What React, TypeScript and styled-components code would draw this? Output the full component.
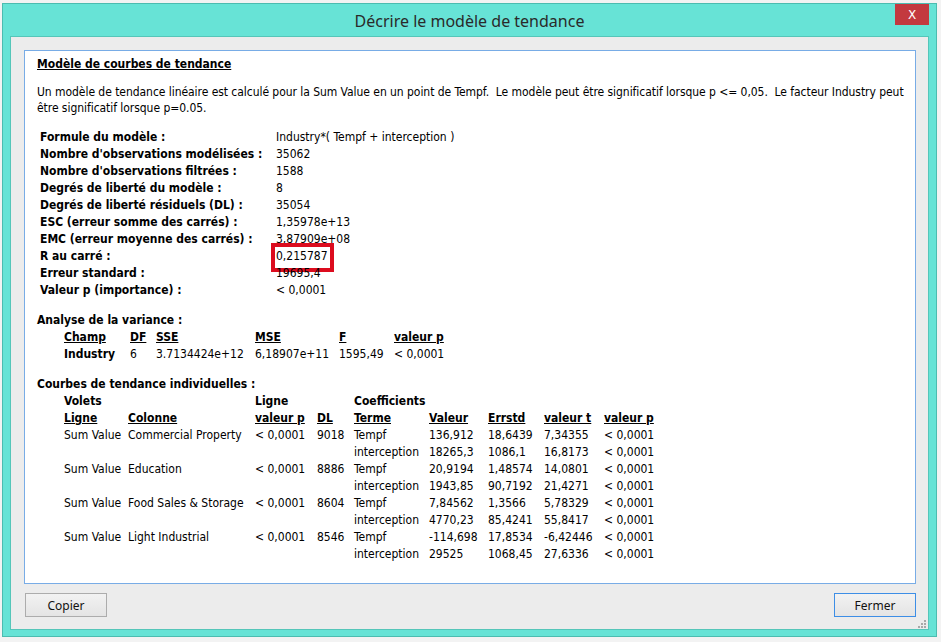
import React from "react";
import styled, { createGlobalStyle } from "styled-components";

const Global = createGlobalStyle`
  html, body { margin: 0; padding: 0; background: #f3f3f3; }
  body { width: 941px; height: 642px; overflow: hidden; }
`;

const Desktop = styled.div`
  width: 941px;
  height: 642px;
  box-sizing: border-box;
  padding: 3px 0 0 2px;
`;

const Window = styled.div`
  width: 935px;
  height: 634px;
  box-sizing: border-box;
  background: #67e3d6;
  border: 1px solid #4cbcb0;
  display: flex;
  flex-direction: column;
  padding: 0 7px 6px 7px;
`;

const TitleBar = styled.div`
  height: 32px;
  display: grid;
  grid-template-columns: 1fr auto 1fr;
  align-items: start;
`;

const TitleText = styled.div`
  grid-column: 2;
  align-self: center;
  font-family: "Noto Sans", "Open Sans", sans-serif;
  font-size: 16px;
  color: #2a2a2a;
  padding-top: 1px;
`;

const CloseButton = styled.div`
  grid-column: 3;
  justify-self: end;
  width: 34px;
  height: 21px;
  background: #c3393f;
  color: #ffffff;
  display: flex;
  align-items: center;
  justify-content: center;
  font-family: "DejaVu Sans", sans-serif;
  font-size: 12px;
`;

const Client = styled.div`
  position: relative;
  flex: 1;
  background: #ececec;
  border: 1px solid #55c6b9;
  display: flex;
  flex-direction: column;
  padding: 13px 12px 12px 13px;
`;

const Panel = styled.div`
  flex: 1;
  background: #ffffff;
  border: 1px solid #78ace6;
  padding: 5px 12px 0 12px;
  font-family: "DejaVu Sans Condensed", "DejaVu Sans", sans-serif;
  font-stretch: condensed;
  font-size: 12px;
  color: #000;
`;

const Heading = styled.div`
  font-weight: bold;
  text-decoration: underline;
  line-height: 16px;
`;

const Paragraph = styled.div`
  margin-top: 12px;
  line-height: 16px;
  white-space: pre;
  letter-spacing: -0.05px;
`;

const Section = styled.div<{ $gap: number }>`
  margin-top: ${(p) => p.$gap}px;
`;

const SectionTitle = styled.div`
  font-weight: bold;
  line-height: 17px;
`;

const StatsGrid = styled.div`
  margin-left: 3px;
  display: grid;
  grid-template-columns: 236px auto;
  grid-auto-rows: 17px;
  line-height: 17px;
  justify-content: start;
`;

const StatLabel = styled.div`
  font-weight: bold;
  white-space: nowrap;
`;

const StatValue = styled.div`
  position: relative;
  white-space: nowrap;
`;

const Highlight = styled.span`
  position: absolute;
  left: -5px;
  top: -5px;
  width: 63px;
  height: 29px;
  box-sizing: border-box;
  border: 4px solid #dc0c1e;
  pointer-events: none;
`;

const DataGrid = styled.div<{ $cols: string }>`
  margin-left: 27px;
  display: grid;
  grid-template-columns: ${(p) => p.$cols};
  grid-auto-rows: 17px;
  line-height: 17px;
  white-space: nowrap;
`;

const Cell = styled.div<{ $head?: boolean; $bold?: boolean; $col?: number }>`
  font-weight: ${(p) => (p.$head || p.$bold ? "bold" : "normal")};
  text-decoration: ${(p) => (p.$head ? "underline" : "none")};
  ${(p) => (p.$col ? `grid-column: ${p.$col};` : "")}
`;

const ButtonRow = styled.div`
  margin-top: 9px;
  display: flex;
  justify-content: space-between;
  padding-left: 1px;
`;

const Button = styled.button<{ $default?: boolean }>`
  width: 82px;
  height: 24px;
  box-sizing: border-box;
  border: 1px solid ${(p) => (p.$default ? "#3d8ee6" : "#acacac")};
  background: linear-gradient(#f2f2f2, #e4e4e4);
  font-family: "Noto Sans", "Open Sans", sans-serif;
  font-size: 12px;
  color: #111;
  padding: 0;
  margin: 0;
`;

const Grip = styled.svg`
  position: absolute;
  right: 2px;
  bottom: 1px;
`;

const stats: [string, string][] = [
  ["Formule du modèle :", "Industry*( Tempf + interception )"],
  ["Nombre d'observations modélisées :", "35062"],
  ["Nombre d'observations filtrées :", "1588"],
  ["Degrés de liberté du modèle :", "8"],
  ["Degrés de liberté résiduels (DL) :", "35054"],
  ["ESC (erreur somme des carrés) :", "1,35978e+13"],
  ["EMC (erreur moyenne des carrés) :", "3,87909e+08"],
  ["R au carré :", "0,215787"],
  ["Erreur standard :", "19695,4"],
  ["Valeur p (importance) :", "< 0,0001"],
];

const varHead = ["Champ", "DF", "SSE", "MSE", "F", "valeur p"];
const varRow = ["Industry", "6", "3.7134424e+12", "6,18907e+11", "1595,49", "< 0,0001"];

const indHead = ["Ligne", "Colonne", "valeur p", "DL", "Terme", "Valeur", "Errstd", "valeur t", "valeur p"];

const indRows: string[][] = [
  ["Sum Value", "Commercial Property", "< 0,0001", "9018", "Tempf", "136,912", "18,6439", "7,34355", "< 0,0001"],
  ["", "", "", "", "interception", "18265,3", "1086,1", "16,8173", "< 0,0001"],
  ["Sum Value", "Education", "< 0,0001", "8886", "Tempf", "20,9194", "1,48574", "14,0801", "< 0,0001"],
  ["", "", "", "", "interception", "1943,85", "90,7192", "21,4271", "< 0,0001"],
  ["Sum Value", "Food Sales & Storage", "< 0,0001", "8604", "Tempf", "7,84562", "1,3566", "5,78329", "< 0,0001"],
  ["", "", "", "", "interception", "4770,23", "85,4241", "55,8417", "< 0,0001"],
  ["Sum Value", "Light Industrial", "< 0,0001", "8546", "Tempf", "-114,698", "17,8534", "-6,42446", "< 0,0001"],
  ["", "", "", "", "interception", "29525", "1068,45", "27,6336", "< 0,0001"],
];

export default function App() {
  return (
    <>
      <Global />
      <Desktop>
        <Window>
          <TitleBar>
            <TitleText>Décrire le modèle de tendance</TitleText>
            <CloseButton>X</CloseButton>
          </TitleBar>
          <Client>
            <Panel>
              <Heading>Modèle de courbes de tendance</Heading>
              <Paragraph>
                {"Un modèle de tendance linéaire est calculé pour la Sum Value en un point de Tempf.  Le modèle peut être significatif lorsque p <= 0,05.  Le facteur Industry peut"}
                <br />
                {"être significatif lorsque p=0.05."}
              </Paragraph>
              <Section $gap={13}>
                <StatsGrid>
                  {stats.map(([l, v]) => (
                    <React.Fragment key={l}>
                      <StatLabel>{l}</StatLabel>
                      <StatValue>
                        {v}
                        {l === "R au carré :" && <Highlight />}
                      </StatValue>
                    </React.Fragment>
                  ))}
                </StatsGrid>
              </Section>
              <Section $gap={13}>
                <SectionTitle>Analyse de la variance :</SectionTitle>
                <DataGrid $cols="66px 26px 99px 84px 55px auto">
                  {varHead.map((h) => (
                    <Cell key={h} $head>{h}</Cell>
                  ))}
                  {varRow.map((c, i) => (
                    <Cell key={i} $bold={i === 0}>{c}</Cell>
                  ))}
                </DataGrid>
              </Section>
              <Section $gap={13}>
                <SectionTitle>Courbes de tendance individuelles :</SectionTitle>
                <DataGrid $cols="64px 127px 62px 37px 75px 59px 56px 60px auto">
                  <Cell $bold $col={1}>Volets</Cell>
                  <Cell $bold $col={3}>Ligne</Cell>
                  <Cell $bold $col={5}>Coefficients</Cell>
                  {indHead.map((h, i) => (
                    <Cell key={i} $head $col={i + 1}>{h}</Cell>
                  ))}
                  {indRows.map((r, ri) =>
                    r.map((c, ci) => (
                      <Cell key={`${ri}-${ci}`} $col={ci + 1}>{c}</Cell>
                    ))
                  )}
                </DataGrid>
              </Section>
            </Panel>
            <ButtonRow>
              <Button>Copier</Button>
              <Button $default>Fermer</Button>
            </ButtonRow>
            <Grip width="8" height="8" viewBox="0 0 8 8">
              <rect x="6" y="0" width="2" height="2" fill="#a8a8a8" />
              <rect x="3" y="3" width="2" height="2" fill="#a8a8a8" />
              <rect x="6" y="3" width="2" height="2" fill="#a8a8a8" />
              <rect x="0" y="6" width="2" height="2" fill="#a8a8a8" />
              <rect x="3" y="6" width="2" height="2" fill="#a8a8a8" />
              <rect x="6" y="6" width="2" height="2" fill="#a8a8a8" />
            </Grip>
          </Client>
        </Window>
      </Desktop>
    </>
  );
}
